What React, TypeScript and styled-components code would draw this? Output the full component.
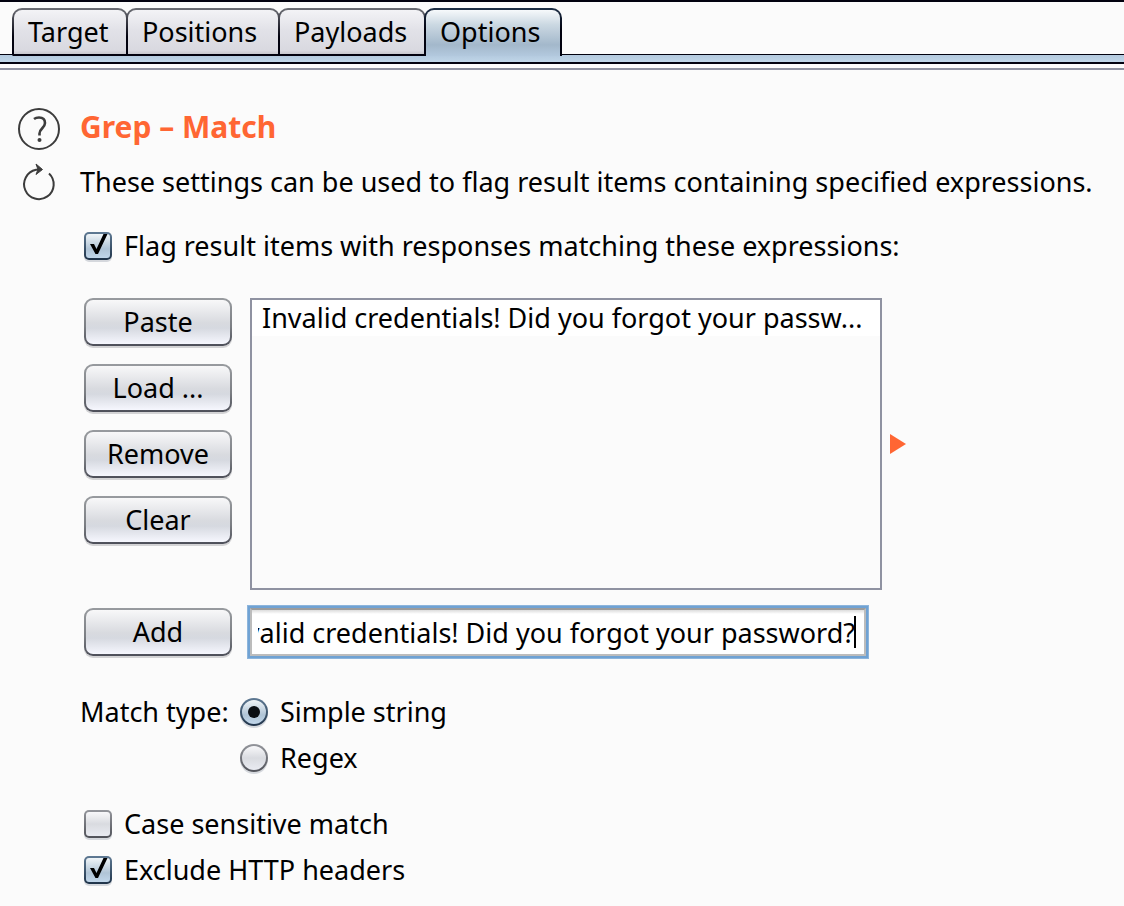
import React, { useLayoutEffect, useRef, useState } from "react";
import styled, { createGlobalStyle } from "styled-components";

const GlobalStyle = createGlobalStyle`
  *, *::before, *::after { box-sizing: border-box; }
  body {
    margin: 0;
    background: #fbfbfb;
    color: #000;
    font: 400 27px/36px "Noto Sans", "Lucida Grande", sans-serif;
  }
  button, input { font: inherit; color: inherit; }
`;

const Page = styled.div`
  border-top: 2px solid #02020f;
  min-height: 100vh;
`;

const TabList = styled.nav`
  display: flex;
  height: 60px;
  padding: 6px 12px 0;
  background: linear-gradient(#02020f, #02020f) 0 52px / 100% 1px no-repeat,
    linear-gradient(#b3c9de, #c0d6e8) 0 53px / 100% 7px no-repeat;
`;

const Tab = styled.button<{ $active: boolean; $width: number }>`
  flex: 0 0 ${(p) => p.$width}px;
  height: 48px;
  margin: 0 -2px 0 0;
  padding: 0 0 ${(p) => (p.$active ? "2px" : "0")} 14px;
  text-align: left;
  line-height: 44px;
  border: 2px solid transparent;
  border-bottom: ${(p) => (p.$active ? "0" : "2px solid #02020f")};
  border-radius: 10px 10px 0 0;
  background: ${(p) =>
    p.$active
      ? `linear-gradient(#f6f9fb 0%, #cbd8e2 32%, #a3b8cb 76%, #b3c9de 100%) padding-box,
         linear-gradient(#1d2f47 0%, #02020f 45%) border-box`
      : `linear-gradient(#f3f3f6 0%, #e2e2e8 45%, #d9d9e0 92%, #c8c8ce 100%) padding-box,
         linear-gradient(#6c6e75 0%, #44454e 22%, #02020f 60%) border-box`};
`;

const TabRule = styled.div`
  height: 8px;
  border-top: 2px solid #02020f;
  border-bottom: 2px solid #8f92a1;
`;

const Section = styled.main`
  padding: 36px 20px 12px 80px;
`;

const TitleRow = styled.div`
  display: flex;
  align-items: center;
  height: 46px;
  margin-left: -64px;
`;

const IconButton = styled.button`
  flex: 0 0 46px;
  height: 46px;
  margin-right: 18px;
  padding: 0;
  border: 0;
  background: none;
`;

const Icon = styled.svg`
  display: block;
`;

const Title = styled.h1`
  margin: 0;
  padding-bottom: 4px;
  color: #ff6633;
  font-size: 30px;
  font-weight: 700;
  line-height: 36px;
`;

const DescriptionRow = styled(TitleRow)`
  margin-top: 8px;
`;

const Description = styled.p`
  margin: 0;
  padding-bottom: 2px;
  white-space: nowrap;
`;

const Choice = styled.label`
  display: flex;
  align-items: center;
  gap: 12px;
  height: 46px;
`;

const Mark = styled.span`
  position: relative;
  flex: 0 0 28px;
  height: 28px;
`;

const Toggle = styled.input`
  appearance: none;
  display: block;
  width: 28px;
  height: 28px;
  margin: 0;
  border: 2px solid transparent;
  border-radius: ${(p) => (p.type === "radio" ? "50%" : "5px")};
  box-shadow: 0 2px 0 #d5d8dd;
  background: linear-gradient(#f8f8fa 0%, #d9dbe0 50%, #e9ebf2 100%) padding-box,
    linear-gradient(#94969c, #505259) border-box;

  &:checked {
    background: linear-gradient(#f0f5f8 0%, #b0c4d6 62%, #c0d6ea 100%) padding-box,
      linear-gradient(#5f7a94, #1f3349) border-box;
  }

  &:not(:checked) + svg {
    display: none;
  }
`;

const MarkDrawing = styled.svg`
  position: absolute;
  inset: 0;
  pointer-events: none;
`;

const Indented = styled.div`
  padding-left: 4px;
`;

const FlagRow = styled(Indented)`
  margin-top: 17px;
`;

const ListRow = styled(Indented)`
  display: flex;
  align-items: stretch;
  gap: 18px;
  margin-top: 29px;
`;

const ButtonColumn = styled.div`
  display: flex;
  flex: 0 0 148px;
  flex-direction: column;
  gap: 18px;
`;

const PushButton = styled.button`
  flex: 0 0 auto;
  width: 148px;
  height: 48px;
  padding: 0;
  border: 2px solid transparent;
  border-radius: 9px;
  box-shadow: 0 2px 0 #d3d3d5;
  background: linear-gradient(#f8f8f9 0%, #d8dadf 52%, #d6d9e0 64%, #f6f7fe 100%) padding-box,
    linear-gradient(#989b9f, #7b7e83 60%, #4d4f59) border-box;
`;

const Expressions = styled.ul`
  flex: 0 1 632px;
  min-width: 0;
  height: 292px;
  margin: 0;
  padding: 0;
  list-style: none;
  border: 2px solid #8f92a1;
`;

const Expression = styled.li`
  height: 36px;
  padding-left: 10px;
  background: #fff;
  white-space: nowrap;
  overflow: hidden;
`;

const ExpandButton = styled.button`
  align-self: center;
  margin-left: -10px;
  padding: 0;
  border: 0;
  background: none;
`;

const AddRow = styled(Indented)`
  display: flex;
  align-items: center;
  gap: 15px;
  margin-top: 15px;
`;

const Field = styled.div`
  position: relative;
  flex: 0 1 622px;
  min-width: 0;
  height: 54px;
  padding: 2px;
  background: #70a2d3;
  border: 1px solid #8db5dc;
`;

const FieldInput = styled.input`
  display: block;
  width: 100%;
  height: 100%;
  padding: 0 9px 0 6px;
  border: 2px solid #bcbcbc;
  border-top-color: #9c9c9c;
  border-radius: 0;
  outline: 0;
  background: linear-gradient(#dcdcdc, #fff 4px);
  caret-color: transparent;
`;

const Caret = styled.span`
  position: absolute;
  top: 10px;
  right: 12px;
  width: 2px;
  height: 32px;
  background: #000;
`;

const MatchType = styled.div`
  display: flex;
  align-items: flex-start;
  margin-top: 30px;
`;

const MatchLabel = styled.span`
  flex: 0 0 160px;
  line-height: 46px;
`;

const Filters = styled(Indented)`
  margin-top: 20px;
`;

type Kind = "checkbox" | "radio";

function Option(props: { kind: Kind; name: string; initial?: boolean; children: string }) {
  return (
    <Choice>
      <Mark>
        <Toggle type={props.kind} name={props.name} defaultChecked={props.initial} />
        <MarkDrawing viewBox="0 0 28 28" width="28" height="28" aria-hidden="true">
          {props.kind === "checkbox" ? (
            <path d="M6 12h4l2.500 5L19.500 2h4L14 22h-2.500z" />
          ) : (
            <circle cx="14" cy="14" r="6" fill="#0b0f14" />
          )}
        </MarkDrawing>
      </Mark>
      {props.children}
    </Choice>
  );
}

const tabs = [
  { name: "Target", width: 116 },
  { name: "Positions", width: 154 },
  { name: "Payloads", width: 148 },
  { name: "Options", width: 138 },
];

export default function App() {
  const field = useRef<HTMLInputElement>(null);
  const [text, setText] = useState("Invalid credentials! Did you forgot your password?");

  useLayoutEffect(() => {
    if (field.current) field.current.scrollLeft = field.current.scrollWidth;
  }, [text]);

  return (
    <Page>
      <GlobalStyle />
      <TabList>
        {tabs.map((tab) => (
          <Tab key={tab.name} type="button" $active={tab.name === "Options"} $width={tab.width}>
            {tab.name}
          </Tab>
        ))}
      </TabList>
      <TabRule />
      <Section>
        <TitleRow>
          <IconButton type="button" aria-label="Help">
            <Icon viewBox="0 0 46 46" width="46" height="46" fill="none" stroke="#3c3c3c">
              <circle cx="23" cy="23" r="20" strokeWidth="2" />
              <path d="M18 13Q20 11.500 23 11.500Q29 11.500 29 17C29 22 23.500 22.500 23.500 27.500V29.500" strokeWidth="2.600" />
              <circle cx="23.500" cy="34" r="2" fill="#3c3c3c" stroke="none" />
            </Icon>
          </IconButton>
          <Title>Grep – Match</Title>
        </TitleRow>
        <DescriptionRow>
          <IconButton type="button" aria-label="Restore defaults">
            <Icon viewBox="0 0 46 46" width="46" height="46" fill="none" stroke="#3c3c3c">
              <path d="M33 13.500A14.800 14.800 0 1 1 20 9.800L24 9.500" strokeWidth="2" />
              <path d="M20 4L26.500 9.500L20 14.500L22 9.500z" fill="#3c3c3c" strokeWidth="1" />
            </Icon>
          </IconButton>
          <Description>
            These settings can be used to flag result items containing specified expressions.
          </Description>
        </DescriptionRow>
        <FlagRow>
          <Option kind="checkbox" name="flag" initial>
            Flag result items with responses matching these expressions:
          </Option>
        </FlagRow>
        <ListRow>
          <ButtonColumn>
            <PushButton type="button">Paste</PushButton>
            <PushButton type="button">Load ...</PushButton>
            <PushButton type="button">Remove</PushButton>
            <PushButton type="button">Clear</PushButton>
          </ButtonColumn>
          <Expressions>
            <Expression>Invalid credentials! Did you forgot your passw...</Expression>
          </Expressions>
          <ExpandButton type="button" aria-label="Expand">
            <Icon viewBox="0 0 16 20" width="16" height="20">
              <path d="M0 0L16 10L0 20z" fill="#ff6633" />
            </Icon>
          </ExpandButton>
        </ListRow>
        <AddRow>
          <PushButton type="button">Add</PushButton>
          <Field>
            <FieldInput
              ref={field}
              aria-label="New expression"
              value={text}
              onChange={(event) => setText(event.target.value)}
            />
            <Caret />
          </Field>
        </AddRow>
        <MatchType role="radiogroup" aria-labelledby="match-type">
          <MatchLabel id="match-type">Match type:</MatchLabel>
          <div>
            <Option kind="radio" name="match" initial>
              Simple string
            </Option>
            <Option kind="radio" name="match">
              Regex
            </Option>
          </div>
        </MatchType>
        <Filters>
          <Option kind="checkbox" name="case">
            Case sensitive match
          </Option>
          <Option kind="checkbox" name="headers" initial>
            Exclude HTTP headers
          </Option>
        </Filters>
      </Section>
    </Page>
  );
}
